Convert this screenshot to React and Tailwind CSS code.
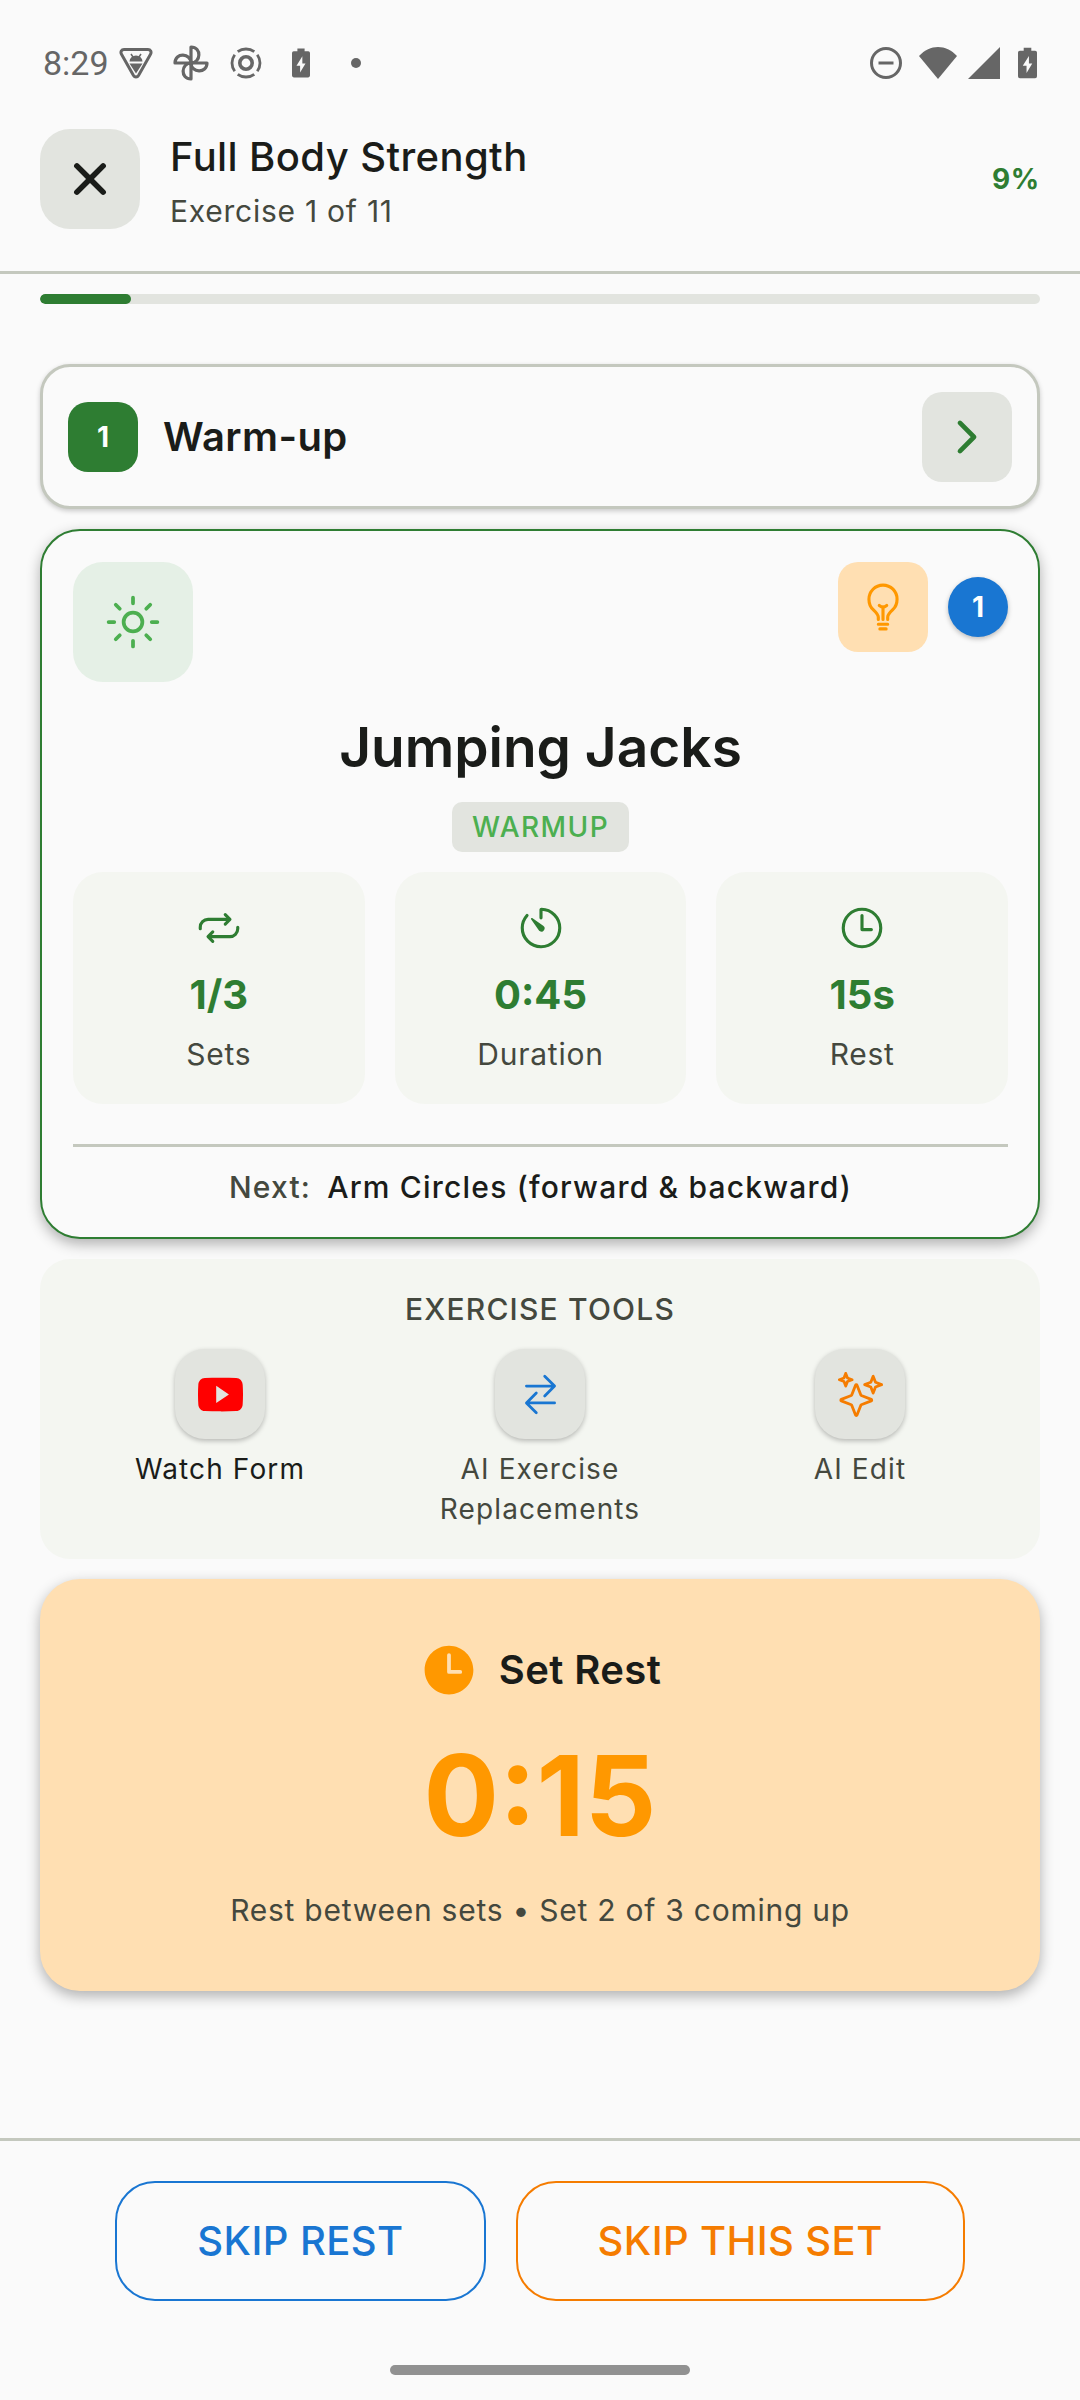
import React from "react";
import {
  IoBulbOutline,
  IoChevronForward,
  IoClose,
  IoLogoYoutube,
  IoRepeatOutline,
  IoSparklesOutline,
  IoSunnyOutline,
  IoSwapHorizontalOutline,
  IoTime,
  IoTimeOutline,
  IoTimerOutline,
} from "react-icons/io5";

function Battery({ className }) {
  return (
    <svg viewBox="0 0 20 34" className={className} aria-hidden="true">
      <path
        fill="currentColor"
        fillRule="evenodd"
        d="M6 1h8v3h4a2 2 0 0 1 2 2v25a2 2 0 0 1-2 2H2a2 2 0 0 1-2-2V6a2 2 0 0 1 2-2h4zM11.500 9.500L5 20h4v7.500L15 17.500h-3.500z"
      />
    </svg>
  );
}

function StatusBar() {
  return (
    <div className="flex h-[107px] items-center justify-between pt-[19px] pr-[43px] pl-[43px] text-[#666666]">
      <div className="flex items-center">
        <time className="font-[Roboto] text-[34px] leading-10">8:29</time>
        <svg viewBox="0 0 34 34" className="ml-[10px] size-[34px]" fill="none" stroke="currentColor" aria-hidden="true">
          <path
            d="M5 3.500h24c2.500 0 3.800 2.500 2.500 4.700L19.500 29.500c-1.200 2-3.800 2-5 0L2.500 8.200C1.200 6 2.500 3.500 5 3.500z"
            strokeWidth="3"
          />
          <path d="M10.500 15.500a6.500 6 0 0 1 13 0zM10.500 17.500h13L17 27.500z" fill="currentColor" stroke="none" />
          <path d="M12 8l2 3M22 8l-2 3" strokeWidth="1.500" />
        </svg>
        <svg
          viewBox="0 0 36 36"
          className="ml-5 size-[36px]"
          fill="none"
          stroke="currentColor"
          strokeWidth="3.200"
          strokeLinejoin="round"
          aria-hidden="true"
        >
          <path d="M18 18V2c11 0 10 16 0 16z" />
          <path d="M18 18h16c0 11-16 10-16 0z" />
          <path d="M18 18v16c-11 0-10-16 0-16z" />
          <path d="M18 18H2C2 7 18 8 18 18z" />
        </svg>
        <svg viewBox="0 0 34 34" className="ml-5 size-[34px]" fill="none" stroke="currentColor" aria-hidden="true">
          <circle cx="17" cy="17" r="6.200" strokeWidth="3.600" />
          <circle
            cx="17"
            cy="17"
            r="14"
            strokeWidth="2.800"
            pathLength="80"
            strokeDasharray="16 4"
            strokeDashoffset="-2"
            transform="rotate(45 17 17)"
          />
        </svg>
        <Battery className="ml-[29px] h-[34px] w-[18px]" />
        <span className="ml-[41px] size-[10px] rounded-full bg-[#666666]" />
      </div>
      <div className="flex items-center">
        <svg viewBox="0 0 34 34" className="size-[34px]" fill="none" stroke="currentColor" strokeWidth="3" aria-hidden="true">
          <circle cx="17" cy="17" r="14.500" />
          <path d="M9.500 17h15" />
        </svg>
        <svg viewBox="0 0 38 32" className="ml-[16px] h-[32px] w-[38px]" aria-hidden="true">
          <path fill="currentColor" d="M19 32L0 9C11-3 27-3 38 9z" />
        </svg>
        <svg viewBox="0 0 32 32" className="ml-[11px] size-[32px]" aria-hidden="true">
          <path fill="currentColor" d="M0 32L32 0v32z" />
        </svg>
        <Battery className="ml-[18px] h-[34px] w-[19px]" />
      </div>
    </div>
  );
}

function Stat({ icon: Icon, value, label }) {
  return (
    <div className="flex flex-1 flex-col items-center rounded-[30px] bg-[#f4f6f1] pt-[31px] pb-[30px]">
      <Icon className="size-[50px] text-[#2e7d32]" aria-hidden="true" />
      <dd className="mt-3 text-[40px] leading-[60px] font-bold text-[#2e7d32]">{value}</dd>
      <dt className="mt-[9px] text-[30px] leading-10 tracking-wide text-[#44483e]">{label}</dt>
    </div>
  );
}

function Tool({ icon: Icon, iconClass, label, labelClass }) {
  return (
    <button type="button" className="flex flex-1 flex-col items-center gap-[10px] px-[30px]">
      <span className="flex size-[90px] items-center justify-center rounded-[30px] bg-[#e2e4df] shadow-[0_2px_5px_rgba(0,0,0,0.25)]">
        <Icon className={iconClass} aria-hidden="true" />
      </span>
      <span className={labelClass}>{label}</span>
    </button>
  );
}

export default function App() {
  const current = 1;
  const total = 11;
  const progress = (current / total) * 100;
  return (
    <div className="flex min-h-screen flex-col bg-[#fafafa] font-[Inter,sans-serif] text-[#1a1c19]">
      <StatusBar />

      <header className="flex items-center gap-[30px] border-b-3 border-[#c4c8be] px-10 pt-5 pb-10">
        <button
          type="button"
          aria-label="Close workout"
          className="flex size-[100px] items-center justify-center rounded-[30px] bg-[#e2e4df]"
        >
          <IoClose className="size-[60px]" />
        </button>
        <div className="flex flex-1 flex-col gap-1">
          <h1 className="text-[40px] leading-[60px] font-medium tracking-[0.01em]">Full Body Strength</h1>
          <p className="text-[30px] leading-10 tracking-wide text-[#44483e]">
            Exercise {current} of {total}
          </p>
        </div>
        <span className="text-[28px] leading-10 font-bold tracking-wide text-[#2e7d32]">{Math.round(progress)}%</span>
      </header>

      <div
        role="progressbar"
        aria-label="Workout progress"
        aria-valuenow={Math.round(progress)}
        aria-valuemin={0}
        aria-valuemax={100}
        className="mx-10 mt-5 h-[10px] overflow-hidden rounded-full bg-[#e2e4df]"
      >
        <div className="h-full rounded-full bg-[#2e7d32]" style={{ width: `${progress}%` }} />
      </div>

      <main className="flex flex-col gap-5 px-10 pt-[60px] pb-10">
        <section className="flex items-center rounded-[30px] border-3 border-[#c4c8be] bg-[#fafafa] px-[25px] pt-[25px] pb-6 shadow-[0_2px_5px_rgba(0,0,0,0.2)]">
          <span className="flex size-[70px] items-center justify-center rounded-[20px] bg-[#2e7d32] text-[28px] leading-10 font-bold text-white">
            1
          </span>
          <h2 className="ml-[25px] flex-1 text-[40px] leading-[60px] font-semibold tracking-[0.01em]">Warm-up</h2>
          <button
            type="button"
            aria-label="Open Warm-up"
            className="flex size-[90px] items-center justify-center rounded-[20px] bg-[#e2e4df] text-[#2e7d32]"
          >
            <IoChevronForward className="size-[50px]" />
          </button>
        </section>

        <section className="rounded-[40px] border-2 border-[#2e7d32] bg-[#fafafa] pt-[31px] pr-[30px] pb-[30px] pl-[31px] shadow-[0_5px_14px_rgba(0,0,0,0.3)]">
          <div className="flex items-start justify-between">
            <span className="flex size-[120px] items-center justify-center rounded-[30px] bg-[#e5f0e6] text-[#4caf50]">
              <IoSunnyOutline className="size-[60px]" aria-hidden="true" />
            </span>
            <div className="flex items-center gap-5">
              <button
                type="button"
                aria-label="Exercise tips"
                className="flex size-[90px] items-center justify-center rounded-[20px] bg-[#ffdfb2] text-[#ff9800]"
              >
                <IoBulbOutline className="size-[50px]" />
              </button>
              <span className="flex size-[60px] items-center justify-center rounded-full bg-[#1976d2] text-[28px] leading-10 font-bold text-white shadow-[0_2px_5px_rgba(0,0,0,0.25)]">
                1
              </span>
            </div>
          </div>

          <h3 className="mt-[30px] text-center text-[55px] leading-[70px] font-semibold">Jumping Jacks</h3>
          <div className="mt-5 flex justify-center">
            <span className="rounded-[10px] bg-[#e2e4df] px-5 py-[5px] text-[28px] leading-10 font-medium tracking-wider text-[#4caf50]">
              WARMUP
            </span>
          </div>

          <dl className="mt-5 flex gap-[30px]">
            <Stat icon={IoRepeatOutline} value="1/3" label="Sets" />
            <Stat icon={IoTimerOutline} value="0:45" label="Duration" />
            <Stat icon={IoTimeOutline} value="15s" label="Rest" />
          </dl>

          <p className="mt-10 flex justify-center gap-4 border-t-3 border-[#c4c8be] pt-5 text-[30px] leading-10 font-medium tracking-[0.04em]">
            <span className="text-[#44483e]">Next:</span>
            <span>Arm Circles (forward &amp; backward)</span>
          </p>
        </section>

        <section className="rounded-[30px] bg-[#f4f6f1] px-5 pt-[25px] pb-[30px]">
          <h3 className="text-center text-[30px] leading-[50px] font-medium tracking-[0.04em] text-[#44483e]">EXERCISE TOOLS</h3>
          <div className="mt-[15px] flex items-start">
            <Tool
              icon={IoLogoYoutube}
              iconClass="size-[45px] text-[#ff0000]"
              label="Watch Form"
              labelClass="text-[28px] leading-10 tracking-[0.04em]"
            />
            <Tool
              icon={IoSwapHorizontalOutline}
              iconClass="size-[45px] text-[#1976d2]"
              label="AI Exercise Replacements"
              labelClass="text-[28px] leading-10 tracking-[0.04em] text-[#44483e]"
            />
            <Tool
              icon={IoSparklesOutline}
              iconClass="size-[45px] text-[#f57c00]"
              label="AI Edit"
              labelClass="text-[28px] leading-10 tracking-[0.04em] text-[#44483e]"
            />
          </div>
        </section>

        <section className="flex flex-col items-center gap-[30px] rounded-[40px] bg-[#ffdfb2] px-[60px] py-[61px] shadow-[0_5px_14px_rgba(0,0,0,0.3)]">
          <div className="flex items-center gap-5">
            <IoTime className="size-[60px] text-[#ff9800]" aria-hidden="true" />
            <h3 className="text-[40px] leading-[60px] font-semibold tracking-[0.01em]">Set Rest</h3>
          </div>
          <div role="timer" className="text-[112px] leading-[130px] font-bold text-[#ff9800]">
            0:15
          </div>
          <p className="text-[30px] leading-10 tracking-wide text-[#44483e]">Rest between sets • Set 2 of 3 coming up</p>
        </section>
      </main>

      <footer className="mt-auto border-t-3 border-[#c4c8be] px-10 pt-10 pb-[25px]">
        <div className="flex justify-center gap-[30px]">
          <button
            type="button"
            className="h-[120px] rounded-[40px] border-2 border-[#1976d2] px-20 text-[40px] leading-[60px] font-medium tracking-[0.01em] text-[#1976d2]"
          >
            SKIP REST
          </button>
          <button
            type="button"
            className="h-[120px] rounded-[40px] border-2 border-[#f57c00] px-20 text-[40px] leading-[60px] font-medium tracking-[0.01em] text-[#f57c00]"
          >
            SKIP THIS SET
          </button>
        </div>
        <div className="mx-auto mt-16 h-[10px] w-[300px] rounded-full bg-[#919191]" />
      </footer>
    </div>
  );
}
